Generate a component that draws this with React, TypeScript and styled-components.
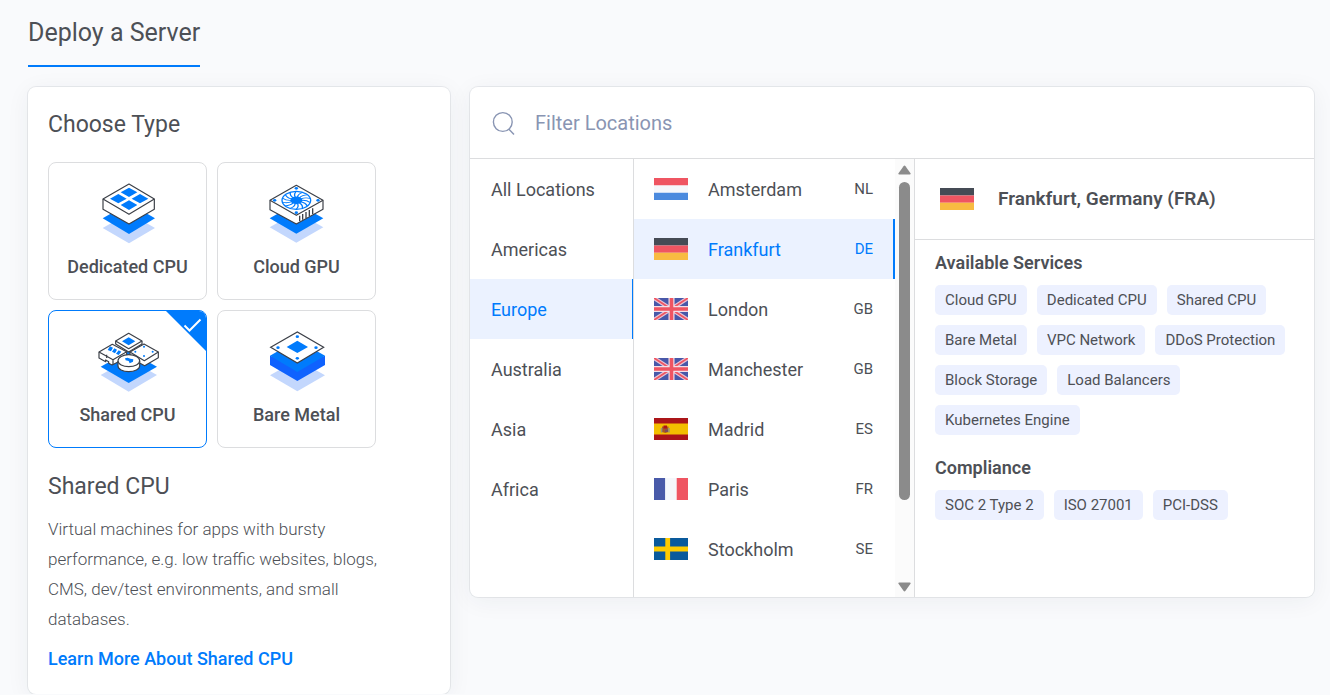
import React, { useState } from "react";
import styled, { createGlobalStyle, css } from "styled-components";

const blue = "#007bfc";
const ink = "#4d5056";
const line = "#dcdddf";

const GlobalStyle = createGlobalStyle`
  *, *::before, *::after { box-sizing: border-box; }
  body {
    margin: 0;
    background: #f9fafc;
    color: ${ink};
    font-family: Roboto, "Liberation Sans", sans-serif;
    font-size: 18px;
  }
  h1, h2, h3, p, ul { margin: 0; padding: 0; }
  ul { list-style: none; }
  button, input { font: inherit; color: inherit; }
`;

const Page = styled.main`
  padding: 0 16px 0 28px;
`;

const PageTitle = styled.h1`
  display: inline-block;
  height: 67px;
  padding-top: 18px;
  border-bottom: 2px solid ${blue};
  font-size: 25px;
  font-weight: 400;
  line-height: 30px;
  vertical-align: top;
`;

const Columns = styled.div`
  display: grid;
  grid-template-columns: minmax(0, 1fr) minmax(0, 2fr);
  align-items: start;
  gap: 20px;
  padding-top: 20px;
  @media (max-width: 1100px) {
    grid-template-columns: minmax(0, 1fr);
  }
`;

const Panel = styled.section`
  border-radius: 8px;
  background: #fff;
  box-shadow: 0 0 0 1px rgba(40, 50, 70, 0.08), 0 4px 24px rgba(40, 50, 70, 0.06);
`;

const TypePanel = styled(Panel)`
  padding: 21px 20px 20px;
`;

const Heading = styled.h2`
  font-size: 23px;
  font-weight: 400;
  line-height: 34px;
`;

const TypeGrid = styled.div`
  display: grid;
  grid-template-columns: repeat(2, minmax(0, 1fr));
  gap: 10px;
  max-width: 328px;
  margin: 20px 0 22px;
`;

const TypeCard = styled.button<{ $active: boolean }>`
  position: relative;
  display: flex;
  flex-direction: column;
  align-items: center;
  gap: 11px;
  height: 138px;
  padding: 17px 0 0;
  overflow: hidden;
  border: 1px solid ${(p) => (p.$active ? blue : line)};
  border-radius: 8px;
  background: #fff;
  font-weight: 500;
  line-height: 24px;
  cursor: pointer;
`;

const Corner = styled.svg`
  position: absolute;
  top: 0;
  right: 0;
`;

const Description = styled.p`
  max-width: 360px;
  margin-top: 10px;
  font-size: 17px;
  font-weight: 300;
  line-height: 30px;
`;

const LearnMore = styled.a`
  display: block;
  margin-top: 10px;
  color: ${blue};
  font-weight: 500;
  line-height: 30px;
  text-decoration: none;
`;

const LocationPanel = styled(Panel)`
  overflow: hidden;
`;

const SearchRow = styled.label`
  display: flex;
  align-items: center;
  gap: 20px;
  height: 72px;
  padding: 0 20px 0 22px;
  border-bottom: 1px solid ${line};
`;

const SearchInput = styled.input`
  flex: 1;
  min-width: 0;
  padding: 0;
  border: 0;
  outline: 0;
  background: none;
  font-size: 20px;
  line-height: 24px;
  &::placeholder { color: #8995b3; opacity: 1; }
`;

const LocationBody = styled.div`
  display: grid;
  grid-template-columns: 164px 281px minmax(0, 1fr);
  min-height: 438px;
`;

const RegionList = styled.ul`
  border-right: 1px solid ${line};
`;

const rowStyle = css<{ $active: boolean }>`
  display: flex;
  align-items: center;
  width: 100%;
  height: 60px;
  border: 0;
  background: ${(p) => (p.$active ? "#ebf2ff" : "transparent")};
  color: ${(p) => (p.$active ? blue : "inherit")};
  text-align: left;
  cursor: pointer;
`;

const RegionRow = styled.button<{ $active: boolean }>`
  ${rowStyle}
  padding: 0 20px 0 21px;
  border-right: 1px solid ${(p) => (p.$active ? blue : "transparent")};
`;

const CityColumn = styled.div`
  display: flex;
  border-right: 1px solid ${line};
`;

const CityList = styled.ul`
  flex: 1;
`;

const CityRow = styled.button<{ $active: boolean }>`
  ${rowStyle}
  gap: 20px;
  padding: 0 20px;
  border-right: 2px solid ${(p) => (p.$active ? blue : "transparent")};
`;

const CountryCode = styled.span`
  margin-left: auto;
  font-size: 15px;
`;

const ScrollTrack = styled.div`
  display: flex;
  flex-direction: column;
  align-items: center;
  gap: 7px;
  width: 19px;
  padding: 6px 0 5px;
  background: #fbfbfb;
`;

const ScrollThumb = styled.div`
  width: 11px;
  height: 318px;
  margin-bottom: auto;
  border-radius: 6px;
  background: #8b8b8b;
`;

const Detail = styled.div`
  min-width: 0;
`;

const DetailHeader = styled.div`
  display: flex;
  align-items: center;
  gap: 24px;
  height: 81px;
  padding: 0 25px;
  border-bottom: 1px solid ${line};
`;

const DetailTitle = styled.h2`
  font-size: 19px;
  font-weight: 600;
  line-height: 24px;
`;

const DetailBody = styled.div`
  display: flex;
  flex-direction: column;
  gap: 20px;
  padding: 10px 20px 20px;
`;

const GroupTitle = styled.h3`
  margin-bottom: 10px;
  font-size: 18px;
  font-weight: 600;
  line-height: 25px;
`;

const TagList = styled.ul`
  display: flex;
  flex-wrap: wrap;
  gap: 10px;
`;

const Tag = styled.li`
  padding: 0 10px;
  border-radius: 5px;
  background: #edf1ff;
  font-size: 15px;
  line-height: 30px;
`;

const dark = "#3d4149";
const pale = "#c3d7fd";

const Art = ({ viewBox, children }: { viewBox: string; children: React.ReactNode }) => (
  <svg width="64" height="64" viewBox={viewBox} fill="none" aria-hidden="true">
    {children}
  </svg>
);

const Box = { fill: "#fff", stroke: dark, strokeWidth: 3.6, strokeLinejoin: "round" as const };

const DedicatedArt = () => (
  <Art viewBox="166 75 192 192">
    <path d="M186 219l79-45 78 45-78 46z" fill={pale} />
    <path d="M186 190l79-45 78 45-78 47z" fill={blue} />
    <path d="M187 132l78-45 76 45v31l-76 44-78-44z" {...Box} />
    <path d="M187 132l78 46 76-46" {...Box} fill="none" />
    <path d="M265 98l25 14-25 14-25-14zM233 117l25 14-25 14-25-14zM298 117l25 14-25 14-25-14zM265 136l25 14-25 15-25-15z" fill={blue} />
  </Art>
);

const GpuArt = () => (
  <Art viewBox="165 75 192 192">
    <path d="M179 217l80-45 81 45-81 46z" fill={pale} />
    <path d="M179 190l80-45 81 45-81 46z" fill={blue} />
    <path d="M180 136l79-45 80 45v27l-80 44-79-43z" {...Box} />
    <path d="M180 136l79 45 80-45" {...Box} fill="none" />
    <path d="M269 182v17M278 177v17M288 171v18M298 165v18M308 160v17" stroke={dark} strokeWidth="4" />
    <ellipse cx="259" cy="136" rx="43" ry="27" stroke={blue} strokeWidth="4" />
    <g transform="translate(259 136) scale(1 .64)">
      <circle r="18" fill={blue} />
      {Array.from({ length: 14 }, (_, i) => (
        <path key={i} d="M15 0Q31 -2 41 10" transform={`rotate(${(i * 360) / 14})`} stroke={blue} strokeWidth="4" />
      ))}
    </g>
    <g fill={blue}>
      <ellipse cx="259" cy="100" rx="5" ry="4" />
      <ellipse cx="259" cy="173" rx="5" ry="4" />
      <ellipse cx="194" cy="136" rx="5" ry="4" />
      <ellipse cx="324" cy="136" rx="5" ry="4" />
    </g>
  </Art>
);

const SharedArt = () => (
  <Art viewBox="166 84 192 192">
    <path d="M180 225l84-47 85 47-85 50z" fill={pale} />
    <path d="M180 200l84-47 85 47-85 49z" fill={blue} />
    <path d="M225 123l39-23 40 23v9l-40 24-39-24z" {...Box} />
    <path d="M225 123l39 23 40-23" {...Box} fill="none" />
    <path d="M264 112l20 12-20 12-20-12z" fill={blue} />
    <path d="M268 156l42-24 43 24v17l-41 24-44-24z" {...Box} />
    <path d="M268 156l43 26 42-26" {...Box} fill="none" />
    <path d="M175 156l40-23 43 22v18l-44 22-10-5v-5l-9-5v5l-20-11z" {...Box} />
    <path d="M175 156l42 23 41-24M217 179v15M198 164v10" {...Box} fill="none" />
    <path d="M208 139l9 4-6 11-10-4zM221 145l8 4-6 11-9-5zM234 151l8 4-8 10-8-4z" fill={blue} />
    <g fill={blue}>
      <circle cx="310" cy="140" r="3" />
      <circle cx="284" cy="155" r="3" />
      <circle cx="336" cy="155" r="3" />
      <circle cx="310" cy="168" r="3" />
    </g>
    <path d="M232 183v15c0 9 14 17 32 17s33-8 33-17v-15" {...Box} />
    <ellipse cx="264.500" cy="182" rx="32.500" ry="18" {...Box} />
    <path d="M253 175l8-2 8 3 9 2-1 7-10 5-3-7-9-2z" fill={blue} />
  </Art>
);

const BareArt = () => (
  <Art viewBox="165 84 192 192">
    <path d="M180 226l82-47 83 47-83 48z" fill={pale} />
    <path d="M180 167l82 30 83-30v28l-83 48-82-48z" fill="#0f62fe" />
    <path d="M180 167l82-47 83 47-83 49z" fill={blue} />
    <path d="M182 142l80-46 79 46-79 47z" {...Box} strokeLinejoin="miter" />
    <path d="M262 122l32 19-32 18-32-18z" fill={blue} />
    <g fill={blue}>
      <ellipse cx="262" cy="110" rx="5" ry="4" />
      <ellipse cx="262" cy="175" rx="5" ry="4" />
      <ellipse cx="204" cy="143" rx="5" ry="4" />
      <ellipse cx="318" cy="143" rx="5" ry="4" />
    </g>
  </Art>
);

const bands: Record<string, [string, string, string]> = {
  NL: ["#ef5562", "#f5f7fb", "#4b8ade"],
  DE: ["#454b55", "#ef5562", "#f8bb42"],
  FR: ["#495aa9", "#f5f7fb", "#ef5562"],
};

const Flag = ({ code }: { code: string }) => {
  const colors = bands[code];
  return (
    <svg width="34" height="22" viewBox="0 0 34 22" aria-hidden="true">
      {colors && code !== "FR" && (
        <>
          <path d="M0 0h34v7.500H0z" fill={colors[0]} />
          <path d="M0 7.400h34v7.300H0z" fill={colors[1]} />
          <path d="M0 14.700h34V22H0z" fill={colors[2]} />
        </>
      )}
      {colors && code === "FR" && (
        <>
          <path d="M0 0h11.300v22H0z" fill={colors[0]} />
          <path d="M11.300 0h11.400v22H11.300z" fill={colors[1]} />
          <path d="M22.700 0H34v22H22.700z" fill={colors[2]} />
        </>
      )}
      {code === "GB" && (
        <>
          <path d="M0 0h34v22H0z" fill="#4858a9" />
          <path d="M0 0l34 22M34 0L0 22" stroke="#e8c3d4" strokeWidth="4" />
          <path d="M0 0l34 22M34 0L0 22" stroke="#ef5562" strokeWidth="1.800" />
          <path d="M17.500 0v22M0 11h34" stroke="#f3dfe8" strokeWidth="6" />
          <path d="M17.500 0v22M0 11h34" stroke="#ef5562" strokeWidth="3.600" />
        </>
      )}
      {code === "ES" && (
        <>
          <path d="M0 0h34v22H0z" fill="#ab1519" />
          <path d="M0 5.500h34v11H0z" fill="#f3bf00" />
          <path d="M8 8.500h6.500v5.500l-3.200 1L8 14z" fill="#a85a22" />
          <path d="M9.500 7.500h3.500v3H9.500z" fill="#ad1519" />
          <path d="M6.800 10h1.500v4.500H6.800zM14.200 10h1.500v4.500h-1.500z" fill="#96967c" />
          <path d="M11 11.500h3v2.500h-3z" fill="#7d4a5e" />
        </>
      )}
      {code === "SE" && (
        <>
          <path d="M0 0h34v22H0z" fill="#0a5a9c" />
          <path d="M13.700 0v22M0 11h34" stroke="#fecb00" strokeWidth="4.800" />
        </>
      )}
    </svg>
  );
};

const SearchIcon = () => (
  <svg width="23" height="24" viewBox="0 0 23 24" fill="none" stroke="#8995b3" strokeWidth="1.400" aria-hidden="true">
    <circle cx="10.800" cy="11" r="9.400" />
    <path d="M16.700 18l5.300 5.500" />
  </svg>
);

const types = [
  { name: "Dedicated CPU", Icon: DedicatedArt },
  { name: "Cloud GPU", Icon: GpuArt },
  { name: "Shared CPU", Icon: SharedArt },
  { name: "Bare Metal", Icon: BareArt },
];

const regions = ["All Locations", "Americas", "Europe", "Australia", "Asia", "Africa"];

const cities = [
  ["Amsterdam", "NL"],
  ["Frankfurt", "DE"],
  ["London", "GB"],
  ["Manchester", "GB"],
  ["Madrid", "ES"],
  ["Paris", "FR"],
  ["Stockholm", "SE"],
];

const groups = [
  {
    title: "Available Services",
    tags: [
      "Cloud GPU", "Dedicated CPU", "Shared CPU", "Bare Metal", "VPC Network",
      "DDoS Protection", "Block Storage", "Load Balancers", "Kubernetes Engine",
    ],
  },
  { title: "Compliance", tags: ["SOC 2 Type 2", "ISO 27001", "PCI-DSS"] },
];

export default function App() {
  const [type, setType] = useState("Shared CPU");
  const [region, setRegion] = useState("Europe");
  const [city, setCity] = useState("Frankfurt");

  return (
    <Page>
      <GlobalStyle />
      <PageTitle>Deploy a Server</PageTitle>
      <Columns>
        <TypePanel>
          <Heading>Choose Type</Heading>
          <TypeGrid>
            {types.map(({ name, Icon }) => (
              <TypeCard key={name} type="button" $active={name === type} aria-pressed={name === type} onClick={() => setType(name)}>
                <Icon />
                {name}
                {name === type && (
                  <Corner width="40" height="40" viewBox="0 0 40 40" fill="none" aria-hidden="true">
                    <path d="M0 0h40v40z" fill={blue} />
                    <path d="M18.500 14.500l5 5L34.500 8.500" stroke="#fff" strokeWidth="2" />
                  </Corner>
                )}
              </TypeCard>
            ))}
          </TypeGrid>
          <Heading>Shared CPU</Heading>
          <Description>
            Virtual machines for apps with bursty performance, e.g. low traffic websites, blogs, CMS,
            dev/test environments, and small databases.
          </Description>
          <LearnMore href="#shared-cpu">Learn More About Shared CPU</LearnMore>
        </TypePanel>

        <LocationPanel>
          <SearchRow>
            <SearchIcon />
            <SearchInput type="text" placeholder="Filter Locations" aria-label="Filter Locations" />
          </SearchRow>
          <LocationBody>
            <RegionList>
              {regions.map((name) => (
                <li key={name}>
                  <RegionRow type="button" $active={name === region} onClick={() => setRegion(name)}>
                    {name}
                  </RegionRow>
                </li>
              ))}
            </RegionList>
            <CityColumn>
              <CityList>
                {cities.map(([name, code]) => (
                  <li key={name}>
                    <CityRow type="button" $active={name === city} onClick={() => setCity(name)}>
                      <Flag code={code} />
                      {name}
                      <CountryCode>{code}</CountryCode>
                    </CityRow>
                  </li>
                ))}
              </CityList>
              <ScrollTrack aria-hidden="true">
                <svg width="13" height="10" viewBox="0 0 13 10">
                  <path d="M5.500 1.200q1-1.400 2 0l5 7q.6 1.300-.8 1.300H1.300Q-.1 9.500.500 8.200z" fill="#8b8b8b" />
                </svg>
                <ScrollThumb />
                <svg width="13" height="10" viewBox="0 0 13 10">
                  <path d="M5.500 8.800q1 1.400 2 0l5-7q.6-1.300-.8-1.300H1.300Q-.1.500.500 1.800z" fill="#8b8b8b" />
                </svg>
              </ScrollTrack>
            </CityColumn>
            <Detail>
              <DetailHeader>
                <Flag code="DE" />
                <DetailTitle>Frankfurt, Germany (FRA)</DetailTitle>
              </DetailHeader>
              <DetailBody>
                {groups.map(({ title, tags }) => (
                  <div key={title}>
                    <GroupTitle>{title}</GroupTitle>
                    <TagList>
                      {tags.map((tag) => (
                        <Tag key={tag}>{tag}</Tag>
                      ))}
                    </TagList>
                  </div>
                ))}
              </DetailBody>
            </Detail>
          </LocationBody>
        </LocationPanel>
      </Columns>
    </Page>
  );
}
